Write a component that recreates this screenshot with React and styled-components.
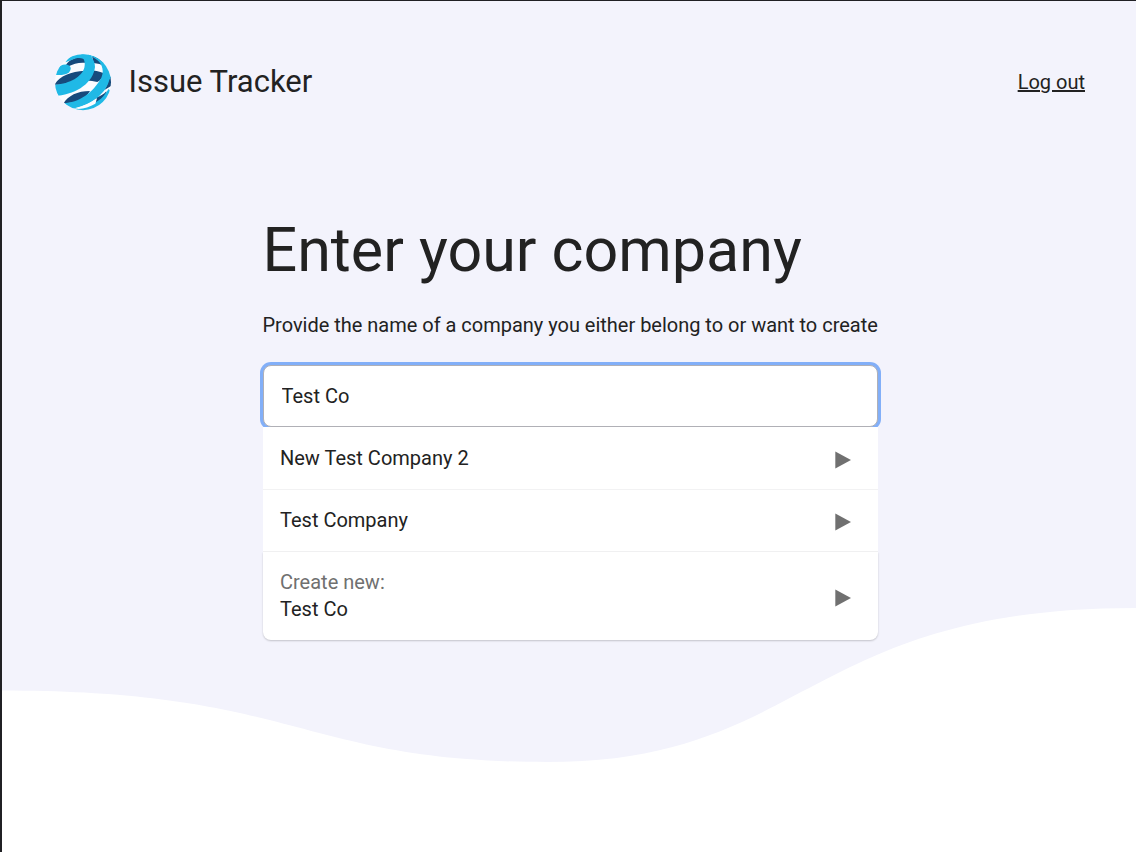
import React from "react";
import styled, { createGlobalStyle } from "styled-components";

const GlobalStyle = createGlobalStyle`
  * { box-sizing: border-box; }
  body {
    margin: 0;
    font-family: Roboto, "Liberation Sans", sans-serif;
    color: #222;
    background: #fff;
  }
`;

const Page = styled.div`
  position: relative;
  width: 1136px;
  height: 852px;
  overflow: hidden;
  background: #f3f3fc;
  border-left: 2px solid #202024;
  border-top: 1px solid #202024;
`;

const Wave = styled.svg`
  position: absolute;
  left: 0;
  bottom: 0;
  display: block;
`;

const Header = styled.header`
  position: relative;
  display: flex;
  align-items: center;
  justify-content: space-between;
  height: 161px;
  padding: 0 51px 0 52px;
`;

const Brand = styled.div`
  display: flex;
  align-items: center;
  gap: 16.5px;
`;

const BrandName = styled.span`
  font-size: 31px;
  line-height: 40px;
`;

const LogoutLink = styled.a`
  font-size: 20px;
  line-height: 24px;
  color: #222;
  text-decoration: underline;
  cursor: pointer;
`;

const Main = styled.main`
  position: relative;
  width: 615px;
  margin: 52px 0 0 261px;
`;

const Title = styled.h1`
  margin: 0 0 0 -0.5px;
  font-size: 61px;
  font-weight: 400;
  line-height: 72px;
  white-space: nowrap;
`;

const Hint = styled.p`
  margin: 26px 0 0 -0.5px;
  font-size: 20px;
  line-height: 26px;
  letter-spacing: -0.015px;
  white-space: nowrap;
`;

const CompanyInput = styled.input`
  display: block;
  width: 615px;
  height: 62px;
  margin: 27px 0 0;
  padding: 0 17.5px;
  border: 1px solid #b0b0b6;
  border-radius: 8px;
  outline: none;
  background: #fff;
  box-shadow: 0 0 0 3px #82aff8;
  font: inherit;
  font-size: 20px;
  color: #222;
`;

const Options = styled.ul`
  position: relative;
  list-style: none;
  margin: 0;
  padding: 0;
`;

const Option = styled.li`
  display: flex;
  align-items: center;
  justify-content: space-between;
  height: ${(p) => (p.$create ? 88 : 62)}px;
  padding: 0 27px 0 17px;
  background: #fff;
  border-bottom: ${(p) => (p.$create ? "none" : "1px solid #f2f2f3")};
  border-radius: ${(p) => (p.$create ? "0 0 8px 8px" : "0")};
  box-shadow: ${(p) => (p.$create ? "0 1px 2px rgba(0, 0, 0, 0.2)" : "none")};
  font-size: 20px;
  line-height: 27px;

  &:first-child {
    height: 63px;
  }
`;

const Muted = styled.div`
  color: #707070;
`;

const Arrow = styled.svg`
  display: block;
  margin-top: 3px;
`;

function Logo() {
  return (
    <svg width="58" height="58" viewBox="42 38 174 174">
      <defs>
        <clipPath id="globe">
          <circle cx="129" cy="125.5" r="84" />
        </clipPath>
      </defs>
      <g clipPath="url(#globe)">
        <rect x="42" y="38" width="174" height="174" fill="#fbfcff" />
        <path d="M78 74C88 56 116 46 142 52L140 68C120 65 100 70 86 78Z" fill="#174a7c" />
        <path d="M42 138C52 110 90 93 134 91L122 112C98 126 70 134 46 133Z" fill="#174a7c" />
        <path d="M156 46C174 50 190 64 194 80C184 72 174 69 160 68Z" fill="#174a7c" />
        <path d="M148 90C162 90 178 93 192 99C190 110 182 120 172 125C156 121 142 120 124 122Z" fill="#174a7c" />
        <path d="M70 190C84 166 112 152 150 152L136 172C116 184 92 190 70 188Z" fill="#174a7c" />
        <path d="M206 112L218 106V134L192 150C200 138 205 126 206 112Z" fill="#174a7c" />
        <path d="M170 171C182 167 192 161 199 153L196 170L184 184L166 190Z" fill="#174a7c" />
        <path d="M62 76C76 68 92 74 92 84C92 98 78 106 48 104L40 96Z" fill="#20b9e6" />
        <path d="M76 66C96 36 124 34 150 38L160 62H139C128 50 110 52 97 58Z" fill="#20b9e6" />
        <path d="M124 42C150 42 165 56 165 80C160 126 112 160 54 166L38 133H46C90 130 126 108 133 82C136 68 134 56 124 47Z" fill="#20b9e6" />
        <path d="M146 36H200L218 106L208 118C198 158 156 194 96 206L70 188C116 188 160 156 184 112C196 84 182 56 146 46Z" fill="#20b9e6" />
        <path d="M100 206C140 202 172 188 190 168L206 146L218 160L160 214H100Z" fill="#20b9e6" />
        <path d="M106 203C132 197 152 188 171 174L166 190C150 199 132 205 116 206Z" fill="#fbfcff" />
      </g>
    </svg>
  );
}

function PlayArrow() {
  return (
    <Arrow width="16" height="18" viewBox="0 0 16 18">
      <path d="M0.3 0.4L16 9L0.3 17.6Z" fill="#707070" />
    </Arrow>
  );
}

export default function App() {
  return (
    <>
      <GlobalStyle />
      <Page>
        <Wave width="1134" height="246" viewBox="2 606 1134 246">
          <path
            d="M2 690.5C300 690.5 300 762 547 762C806 762 806 608 1136 608V852H2Z"
            fill="#fff"
          />
        </Wave>
        <Header>
          <Brand>
            <Logo />
            <BrandName>Issue Tracker</BrandName>
          </Brand>
          <LogoutLink>Log out</LogoutLink>
        </Header>
        <Main>
          <Title>Enter your company</Title>
          <Hint>Provide the name of a company you either belong to or want to create</Hint>
          <CompanyInput defaultValue="Test Co" />
          <Options>
            <Option>
              New Test Company 2
              <PlayArrow />
            </Option>
            <Option>
              Test Company
              <PlayArrow />
            </Option>
            <Option $create>
              <div>
                <Muted>Create new:</Muted>
                <div>Test Co</div>
              </div>
              <PlayArrow />
            </Option>
          </Options>
        </Main>
      </Page>
    </>
  );
}
